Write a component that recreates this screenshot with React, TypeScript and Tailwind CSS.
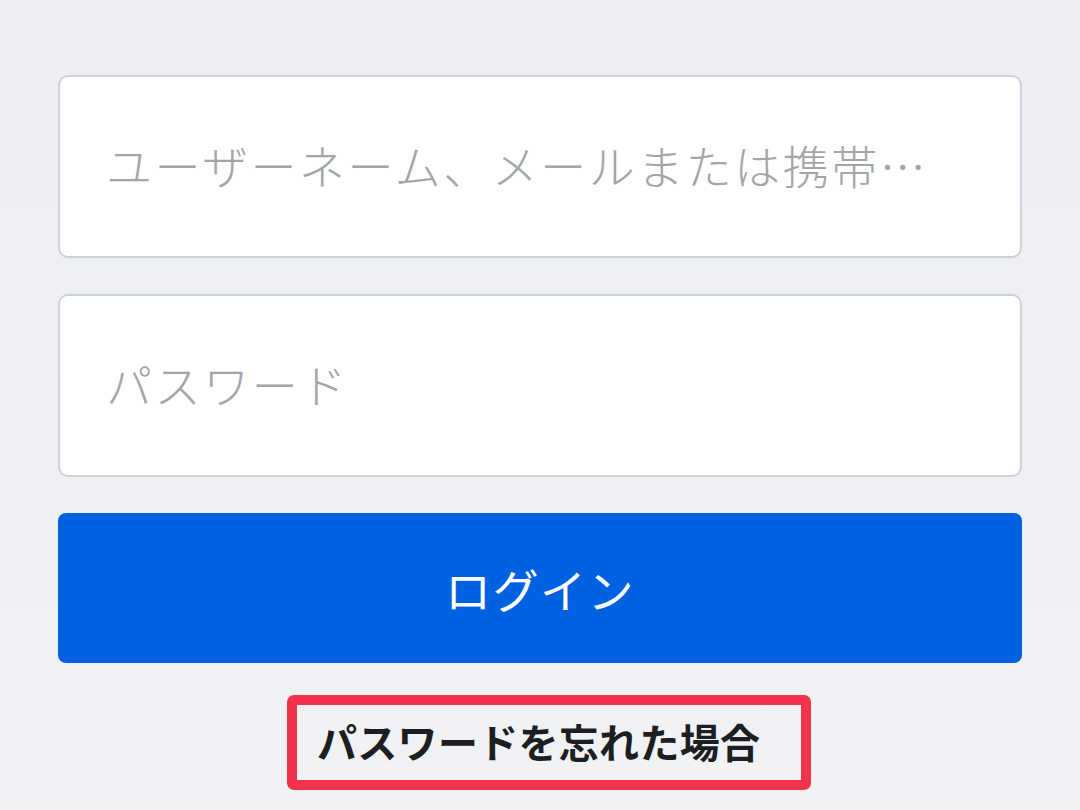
export default function App() {
  const font = { fontFamily: '"Noto Sans CJK JP", "Noto Sans", sans-serif' };

  return (
    <main
      className="w-[1080px] h-[810px] overflow-hidden bg-gradient-to-b from-[#eceef3] to-[#f1f2f4] flex flex-col items-center pt-[75px]"
      style={font}
    >
      {/* Username input */}
      <div className="w-[964px] h-[183px] bg-white border-2 border-[#cfd2d7] rounded-[10px] flex items-center pl-[46px] pr-[30px] pb-[4px]">
        <span className="text-[46px] font-light text-[#a3a5a8] whitespace-nowrap overflow-hidden text-ellipsis tracking-[2.5px]">
          ユーザーネーム、メールまたは携帯…
        </span>
      </div>

      {/* Password input */}
      <div className="mt-[36px] w-[964px] h-[183px] bg-white border-2 border-[#cfd2d7] rounded-[10px] flex items-center pl-[46px] pb-[4px]">
        <span className="text-[46px] font-light text-[#a3a5a8] tracking-[2.6px]">パスワード</span>
      </div>

      {/* Login button */}
      <button className="mt-[36px] w-[964px] h-[150px] bg-[#0062e0] rounded-[8px] flex items-center justify-center">
        <span className="text-[46px] text-white tracking-[1.5px]">ログイン</span>
      </button>

      {/* Forgot password, highlighted */}
      <div className="mt-[32px] ml-[18px] w-[524px] h-[95px] border-[10px] border-[#f2334c] rounded-[7px] flex items-center pl-[20px] pb-[4px]">
        <span className="text-[40px] font-bold text-[#1c1e21] tracking-[0.3px]">パスワードを忘れた場合</span>
      </div>
    </main>
  );
}
